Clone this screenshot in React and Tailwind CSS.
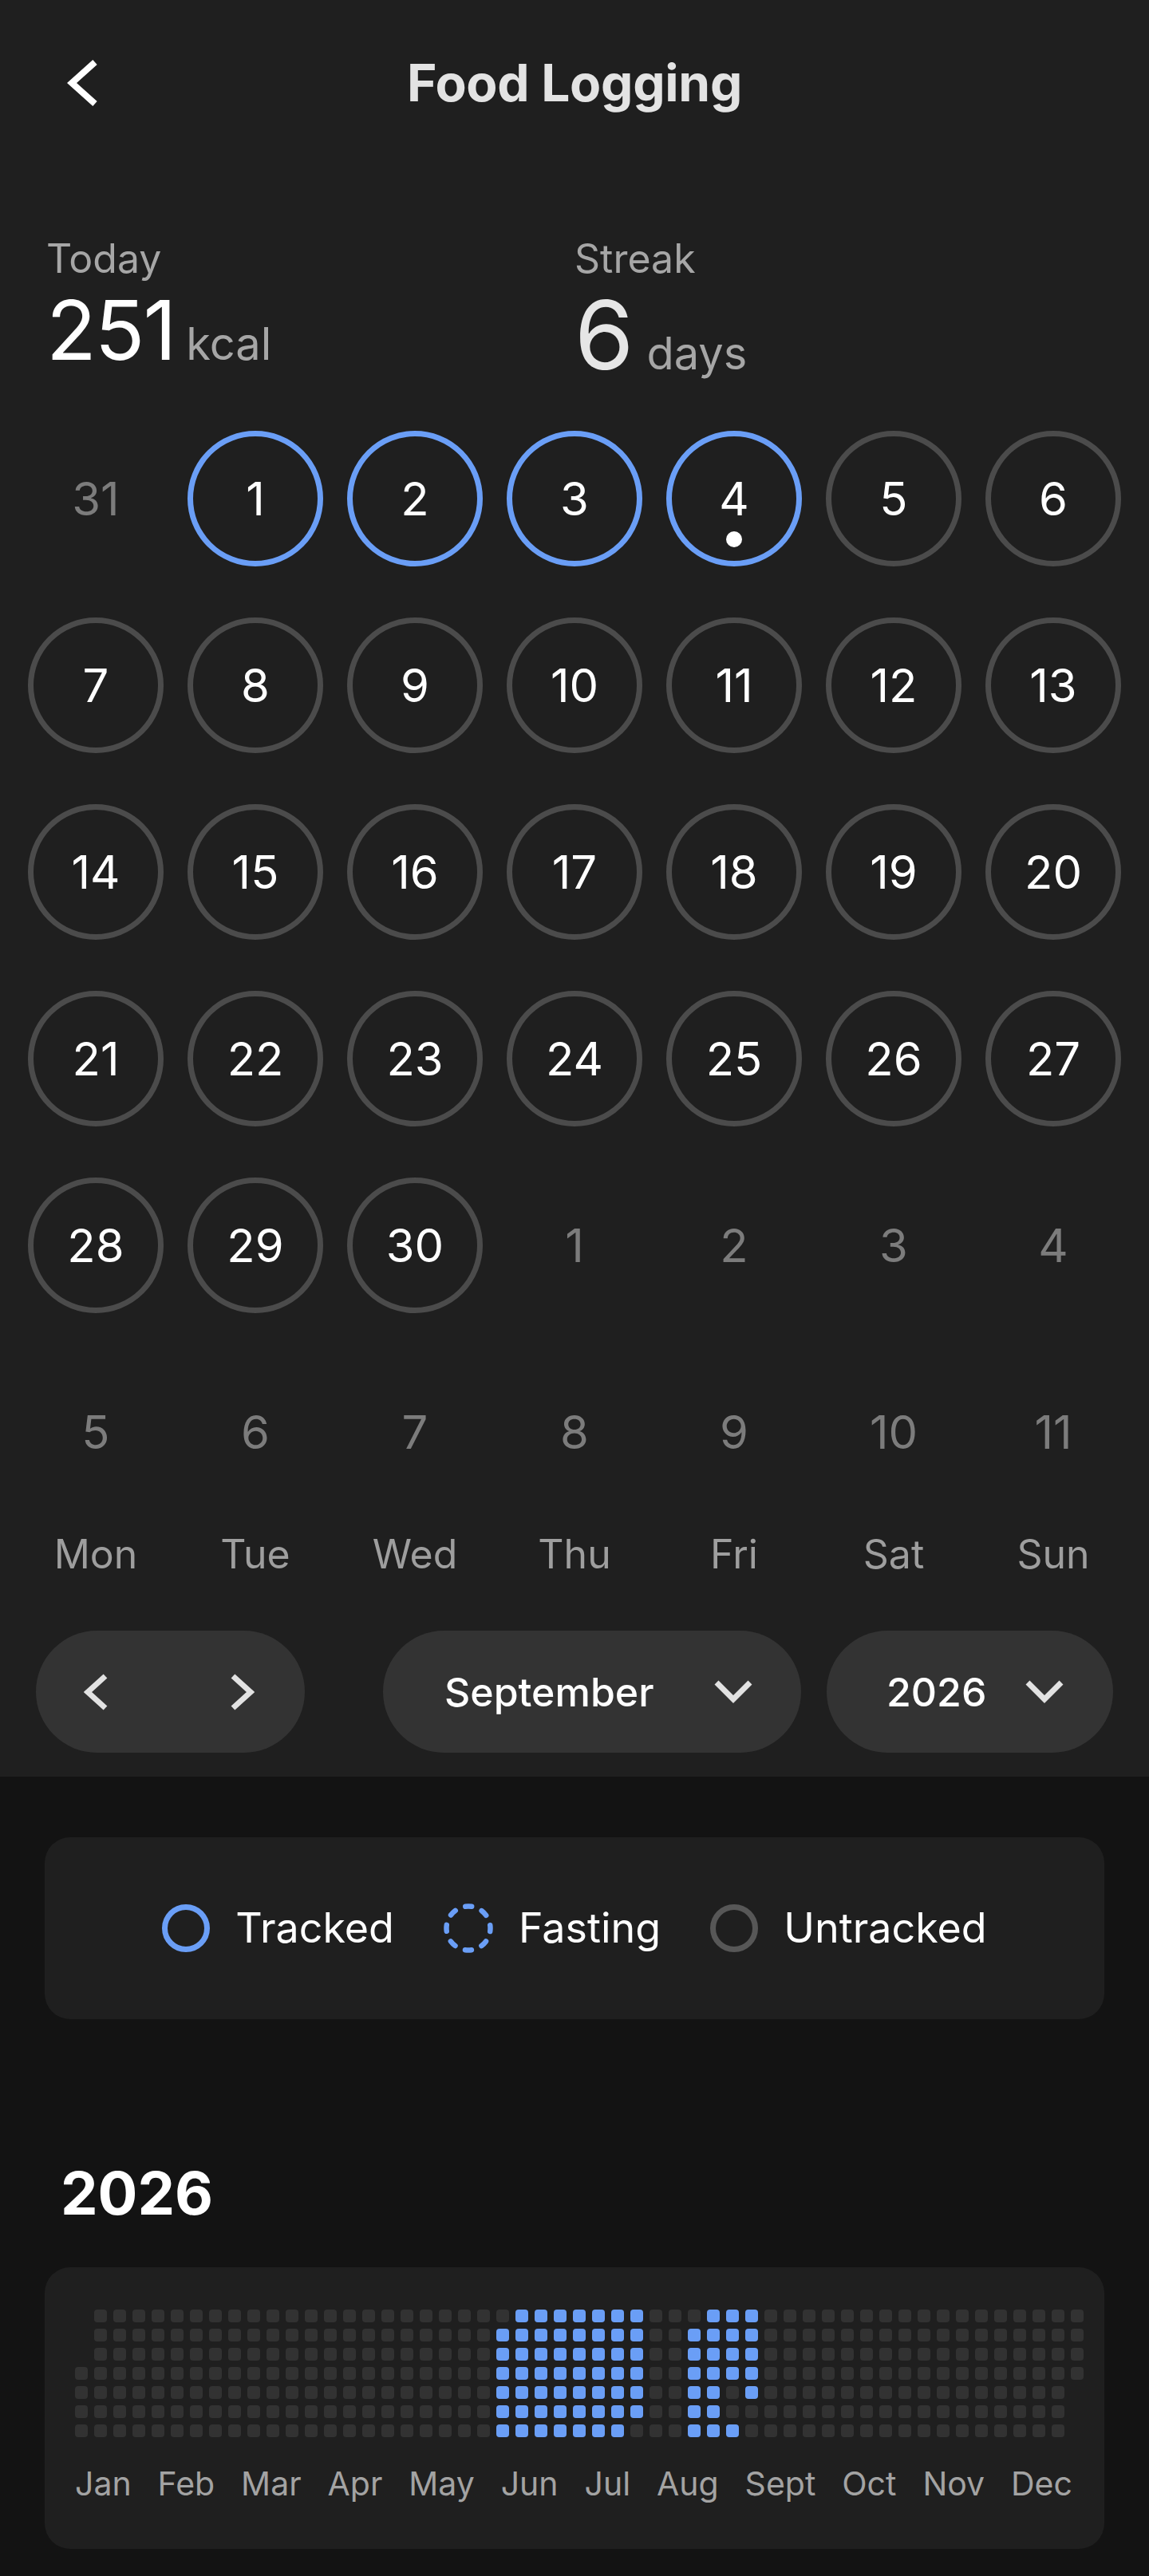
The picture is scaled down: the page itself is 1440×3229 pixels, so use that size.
import React from "react";

function Chevron({ points, w, h, sw, color }) {
  return (
    <svg width={w} height={h} viewBox={`0 0 ${w} ${h}`} fill="none">
      <polyline
        points={points}
        stroke={color}
        strokeWidth={sw}
        strokeLinejoin="miter"
        strokeLinecap="butt"
      />
    </svg>
  );
}

const calendarCells = (() => {
  const cells = [{ d: 31, out: true }];
  for (let i = 1; i <= 30; i++) {
    cells.push({ d: i, tracked: i <= 4, today: i === 4 });
  }
  for (let i = 1; i <= 11; i++) cells.push({ d: i, out: true });
  return cells;
})();

const weekdays = ["Mon", "Tue", "Wed", "Thu", "Fri", "Sat", "Sun"];
const months = ["Jan", "Feb", "Mar", "Apr", "May", "Jun", "Jul", "Aug", "Sept", "Oct", "Nov", "Dec"];

const heatCells = (() => {
  const arr = [];
  for (let i = 0; i < 53 * 7; i++) {
    const doy = i - 2;
    if (doy < 1 || doy > 365) {
      arr.push("none");
    } else if (
      (doy >= 153 && doy <= 206) ||
      (doy >= 223 && doy <= 239) ||
      (doy >= 242 && doy <= 247)
    ) {
      arr.push("tracked");
    } else {
      arr.push("empty");
    }
  }
  return arr;
})();

function DayCell({ cell }) {
  if (cell.out) {
    return (
      <div className="h-[170px] flex items-center justify-center">
        <span className="text-[58px] leading-none text-[#7c7c7c]">{cell.d}</span>
      </div>
    );
  }
  return (
    <div className="h-[170px] flex items-center justify-center">
      <div
        className={
          cell.tracked
            ? "relative w-[170px] h-[170px] rounded-full border-[7px] border-[#6a9ef6] flex items-center justify-center"
            : "relative w-[170px] h-[170px] rounded-full border-[7px] border-[#4b4b4b] flex items-center justify-center"
        }
      >
        <span className="text-[58px] leading-none text-white">{cell.d}</span>
        {cell.today && (
          <span className="absolute left-1/2 -translate-x-1/2 top-[119px] w-[20px] h-[20px] rounded-full bg-white" />
        )}
      </div>
    </div>
  );
}

export default function App() {
  return (
    <div className="w-[1440px] min-h-[3229px] bg-[#131313] font-['Inter',sans-serif]">
      {/* Top section */}
      <div className="bg-[#1f1f1f] pb-[30px]">
        {/* Header */}
        <div className="h-[208px] grid grid-cols-[1fr_auto_1fr] items-center">
          <div className="pl-[83px] flex items-center">
            <Chevron points="36,4 7,30 36,56" w={42} h={60} sw={8} color="#ffffff" />
          </div>
          <div className="text-[64px] font-bold leading-none text-[#e3e3e3] tracking-[-0.3px]">
            Food Logging
          </div>
          <div />
        </div>

        {/* Stats */}
        <div className="h-[332px] pt-[86px] px-[58px] grid grid-cols-2 items-start">
          <div>
            <div className="text-[50px] leading-[60px] text-[#a6a6a6]">Today</div>
            <div className="mt-[8px] flex items-baseline">
              <span className="text-[103px] leading-[103px] text-white tracking-[-2px]">251</span>
              <span className="ml-[14px] text-[56px] leading-none text-[#a6a6a6]">kcal</span>
            </div>
          </div>
          <div>
            <div className="text-[50px] leading-[60px] text-[#a6a6a6]">Streak</div>
            <div className="mt-[6px] flex items-baseline">
              <span className="text-[120px] leading-[120px] text-[#e6e6e6]">6</span>
              <span className="ml-[16px] text-[56px] leading-none text-[#a6a6a6]">days</span>
            </div>
          </div>
        </div>

        {/* Calendar */}
        <div className="grid grid-cols-7 px-[20px] gap-y-[64px]">
          {calendarCells.map((c, i) => (
            <DayCell key={i} cell={c} />
          ))}
        </div>

        {/* Weekdays */}
        <div className="mt-[38px] grid grid-cols-7 px-[20px]">
          {weekdays.map((w) => (
            <div key={w} className="text-center text-[50px] leading-[60px] text-[#9e9e9e]">
              {w}
            </div>
          ))}
        </div>

        {/* Controls */}
        <div className="mt-[66px] px-[45px] flex items-center justify-between">
          <div className="w-[337px] h-[153px] rounded-full bg-[#333333] flex items-center justify-between pl-[60px] pr-[63px]">
            <Chevron points="27,3 5,23 27,43" w={31} h={46} sw={7} color="#e2e2e2" />
            <Chevron points="4,3 26,23 4,43" w={31} h={46} sw={7} color="#e2e2e2" />
          </div>
          <div className="flex items-center gap-[32px]">
            <div className="w-[524px] h-[153px] rounded-full bg-[#333333] flex items-center justify-between pl-[77px] pr-[61px]">
              <span className="text-[50px] font-medium leading-none text-white">September</span>
              <Chevron points="3,3 24,24 45,3" w={48} h={29} sw={7} color="#e2e2e2" />
            </div>
            <div className="w-[359px] h-[153px] rounded-full bg-[#333333] flex items-center justify-between pl-[75px] pr-[62px]">
              <span className="text-[50px] font-medium leading-none text-white">2026</span>
              <Chevron points="3,3 24,24 45,3" w={48} h={29} sw={7} color="#e2e2e2" />
            </div>
          </div>
        </div>
      </div>

      {/* Lower section */}
      <div className="bg-[#131313] pt-[76px] px-[56px] pb-[34px]">
        {/* Legend */}
        <div className="h-[228px] rounded-[32px] bg-[#1f1f1f] flex items-center justify-center gap-[62px]">
          <div className="flex items-center gap-[32px]">
            <span className="w-[60px] h-[60px] rounded-full border-[7px] border-[#6a9ef6]" />
            <span className="text-[52px] leading-none text-white">Tracked</span>
          </div>
          <div className="flex items-center gap-[32px]">
            <svg width="62" height="62" viewBox="0 0 62 62" fill="none">
              <circle
                cx="31"
                cy="31"
                r="27.5"
                stroke="#6a9ef6"
                strokeWidth="6.5"
                strokeDasharray="8 13.6"
                strokeDashoffset="4"
                strokeLinecap="round"
              />
            </svg>
            <span className="text-[52px] leading-none text-white">Fasting</span>
          </div>
          <div className="flex items-center gap-[32px]">
            <span className="w-[60px] h-[60px] rounded-full border-[7px] border-[#575757]" />
            <span className="text-[52px] leading-none text-white">Untracked</span>
          </div>
        </div>

        {/* Year heading */}
        <div className="mt-[181px] pl-[20px] text-[74px] font-bold leading-[74px] text-white">2026</div>

        {/* Heatmap card */}
        <div className="mt-[56px] h-[353px] rounded-[32px] bg-[#1f1f1f] pt-[53px] pl-[38px]">
          <div className="grid grid-flow-col grid-rows-7 auto-cols-[16px] gap-[8px] w-max">
            {heatCells.map((s, i) => (
              <div
                key={i}
                className={
                  s === "tracked"
                    ? "w-[16px] h-[16px] rounded-[4px] bg-[#6a9ef6]"
                    : s === "empty"
                    ? "w-[16px] h-[16px] rounded-[4px] bg-[#323232]"
                    : "w-[16px] h-[16px] rounded-[4px] bg-transparent"
                }
              />
            ))}
          </div>
          <div className="mt-[33px] w-[1250px] flex justify-between text-[41px] leading-[50px] text-[#a3a3a3]">
            {months.map((m) => (
              <span key={m}>{m}</span>
            ))}
          </div>
        </div>
      </div>
    </div>
  );
}
